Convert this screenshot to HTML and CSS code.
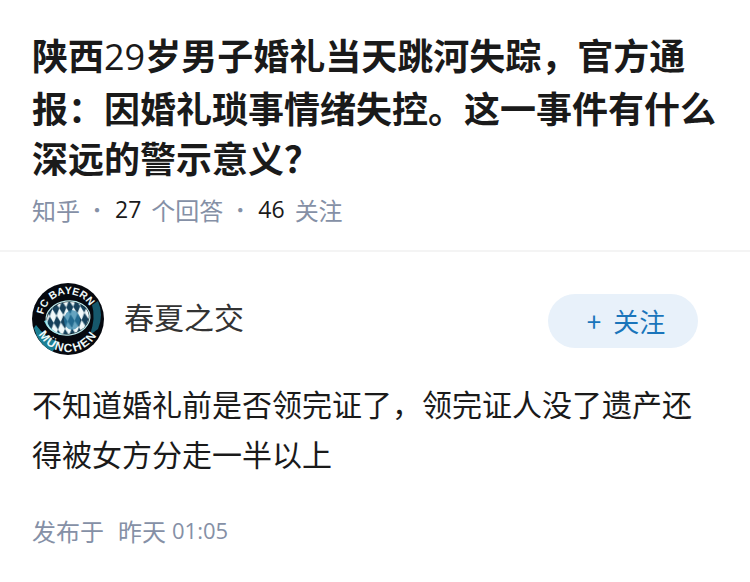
FILE: index.html
```html
<!DOCTYPE html>
<html lang="zh-CN">
    <head>
        <meta charset="UTF-8" />
        <title>问题详情</title>
        <link rel="stylesheet" href="styles.css">
    </head>
    <body>
        <div class="question">
            <h1 class="title">陕西<span class="title-num">29</span>岁男子婚礼当天跳河失踪，官方通报：因婚礼琐事情绪失控。这一事件有什么深远的警示意义？</h1>
            <div class="meta">
                <span>知乎</span>
                <i class="dot">·</i>
                <b class="num">27</b>
                <span>个回答</span>
                <i class="dot">·</i>
                <b class="num">46</b>
                <span>关注</span>
            </div>
        </div>
        <div class="answer">
            <div class="author">
                <svg class="avatar" viewBox="0 0 72 72">
                    <defs>
                        <clipPath id="oval"><ellipse cx="36" cy="35" rx="21" ry="16" transform="rotate(-8 36 35)" /></clipPath>
                        <clipPath id="disc"><circle cx="36" cy="36" r="36" /></clipPath>
                        <pattern id="lozenge" width="7" height="14" patternUnits="userSpaceOnUse" patternTransform="rotate(-6)">
                            <rect width="7" height="14" fill="#123f5a" />
                            <path d="M3.500 0l3.500 7-3.500 7-3.500-7z" fill="#f2fafb" />
                        </pattern>
                        <filter id="soft"><feGaussianBlur stdDeviation="0.5" /></filter>
                        <path id="arc-top" d="M11.400 31.700A25 25 0 0 1 61 36" />
                        <path id="arc-bottom" d="M3 36a33 33 0 0 0 66 0" />
                    </defs>
                    <circle cx="36" cy="36" r="36" fill="#06090f" />
                    <g clip-path="url(#disc)" filter="url(#soft)">
                        <path d="M4 42q10 14 24 17l-8 10q-14-8-18-24z" fill="#1f7f93" />
                        <path d="M66 18q6 14 0 28l-8 6q6-18 2-30z" fill="#14586c" />
                        <path d="M12 38q4 10 16 14l2-2q-11-3-15-13z" fill="#6ed0dc" />
                        <g clip-path="url(#oval)">
                            <rect width="72" height="72" fill="url(#lozenge)" />
                            <ellipse cx="40" cy="37" rx="8" ry="10" fill="#2a7fa6" opacity="0.7" />
                        </g>
                        <ellipse cx="36" cy="35" rx="22" ry="17" transform="rotate(-8 36 35)" fill="none" stroke="#b8e6ea" stroke-width="1.2" />
                    </g>
                    <text class="avatar-text"><textPath href="#arc-top">FC BAYERN</textPath></text>
                    <text class="avatar-text avatar-text-low"><textPath href="#arc-bottom" startOffset="50%" text-anchor="middle">MÜNCHEN</textPath></text>
                </svg>
                <span class="name">春夏之交</span>
                <button class="follow"><span class="plus">+</span>关注</button>
            </div>
            <p class="content">不知道婚礼前是否领完证了，领完证人没了遗产还得被女方分走一半以上</p>
            <div class="time">发布于<span class="time-day">昨天</span><span class="time-num">01:05</span></div>
        </div>
    </body>
</html>
```

FILE: styles.css
```css
* {
    margin: 0;
    padding: 0;
    box-sizing: border-box;
}
body {
    background: #ffffff;
    font-family: "Noto Sans CJK SC", "Noto Sans", sans-serif;
    color: #1a1a1a;
}
.question {
    height: 252px;
    padding: 29px 32px 0;
    border-bottom: 2px solid #f4f4f4;
}
.title {
    font-size: 36px;
    line-height: 50px;
    font-weight: 700;
}
.title-num {
    font-family: "Open Sans", sans-serif;
    font-weight: 400;
}
.meta {
    display: flex;
    align-items: center;
    height: 36px;
    margin-top: 9px;
    font-size: 24px;
    color: #8590a6;
}
.dot {
    width: 34px;
    text-align: center;
    font-style: normal;
    font-size: 20px;
}
.num {
    font-family: "Open Sans", sans-serif;
    font-size: 23px;
    font-weight: 400;
    color: #1a1a1a;
    margin-left: 1px;
    margin-right: 10px;
}
.answer {
    padding: 31px 32px 0;
}
.author {
    display: flex;
    align-items: center;
    height: 72px;
}
.avatar {
    width: 72px;
    height: 72px;
    flex: none;
}
.avatar-text {
    font-family: "Liberation Sans", sans-serif;
    font-size: 10.5px;
    font-weight: 700;
    fill: #eef8f9;
}
.avatar-text-low {
    font-size: 12px;
    letter-spacing: 1.5px;
}
.name {
    flex: 1;
    margin-left: 20px;
    margin-top: -7px;
    font-size: 30px;
    color: #333333;
}
.follow {
    width: 150px;
    height: 54px;
    margin-right: 20px;
    margin-top: 3px;
    padding-left: 6px;
    border: none;
    border-radius: 27px;
    background: #e8f1fa;
    color: #1a75bb;
    font-family: inherit;
    font-size: 26px;
}
.plus {
    margin-right: 12px;
}
.content {
    margin-top: 23px;
    font-size: 30px;
    line-height: 50px;
    color: #1a1a1a;
}
.time {
    display: flex;
    align-items: center;
    margin-top: 34px;
    height: 36px;
    font-size: 24px;
    color: #8590a6;
}
.time-day {
    margin-left: 14px;
}
.time-num {
    margin-left: 6px;
    font-family: "Open Sans", sans-serif;
    font-size: 22px;
}
```
